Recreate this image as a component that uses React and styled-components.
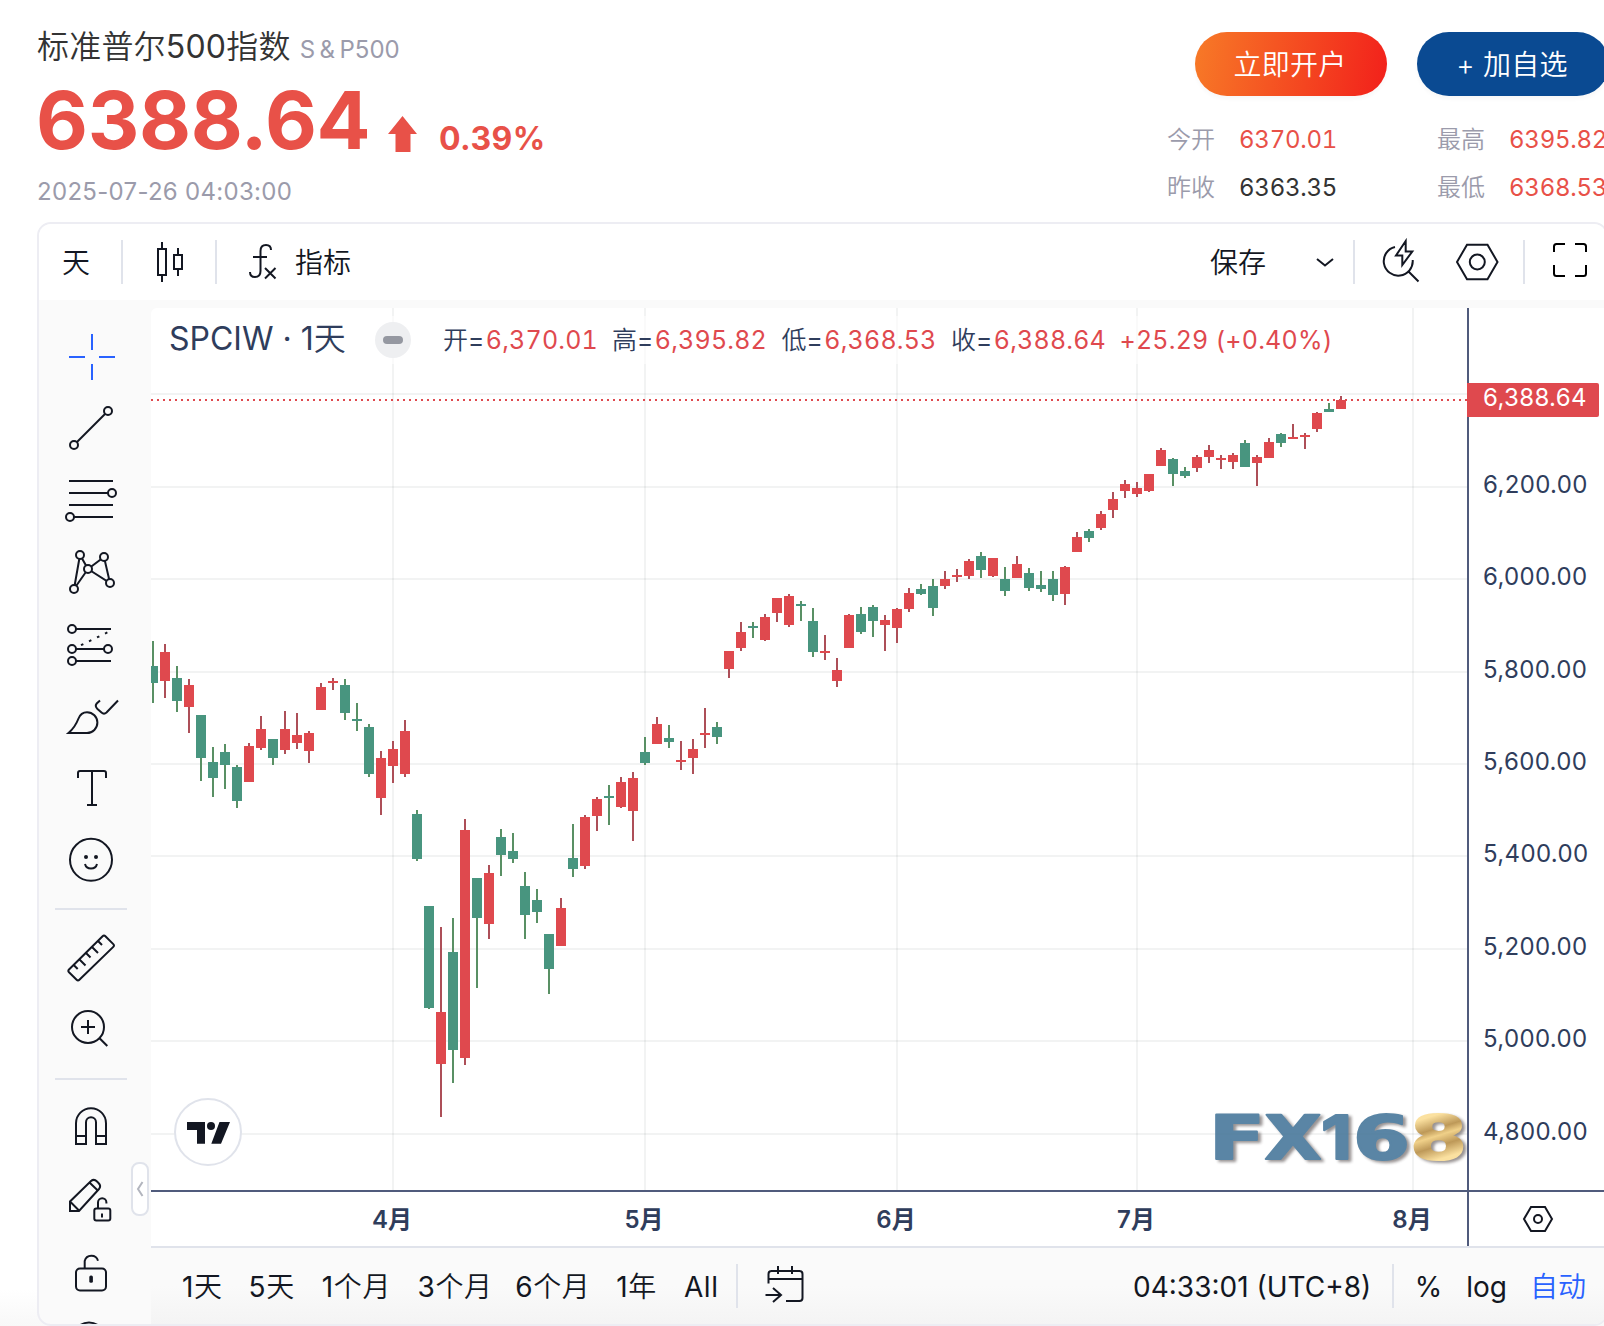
import styled, { createGlobalStyle } from 'styled-components';

const GlobalStyle = createGlobalStyle`
  :root {
    --up: #df494e;
    --down: #48957f;
    --ink: #131722;
    --axis: #2f3d5c;
    --muted: #9b9bab;
    --line: #e0e3eb;
    --panel: #fafafa;
    --blue: #2962ff;
  }

  * {
    box-sizing: border-box;
  }

  body {
    margin: 0;
    background: #fff;
    font-family: Inter, 'Noto Sans CJK SC', sans-serif;
    overflow: hidden;
  }
`;

const Page = styled.div`
  width: 1604px;
  height: 1326px;
  overflow: hidden;
  background: linear-gradient(to bottom, #fff 1290px, #f8f8f8 1326px);
`;

const Header = styled.header`
  display: flex;
  justify-content: space-between;
  width: 1609px;
  height: 222px;
  padding-left: 37px;
`;

const Quote = styled.div`
  display: flex;
  flex-direction: column;
`;

const Title = styled.h1`
  display: flex;
  align-items: baseline;
  gap: 9px;
  height: 46px;
  margin: 24px 0 0;
  color: #333;
  font-size: 32px;
  font-weight: 400;
  letter-spacing: 0.2px;
  line-height: 46px;
  white-space: nowrap;
`;

const Han = styled.span`
  font-weight: 350;
`;

const Symbol = styled.span`
  color: var(--muted);
  font-size: 24px;
  letter-spacing: 0;
`;

const Wide = styled.span`
  letter-spacing: 4.5px;
`;

const PriceRow = styled.div`
  display: flex;
  align-items: flex-start;
  height: 98px;
  color: #e85148;
`;

const Price = styled.span`
  width: 352px;
  margin: 1px 0 0 -1px;
  font-size: 80px;
  font-weight: 700;
  letter-spacing: -0.3px;
  line-height: 98px;
`;

const Arrow = styled.svg`
  width: 29px;
  height: 36px;
  margin-top: 46px;
  fill: currentColor;
`;

const Change = styled.span`
  margin: 49px 0 0 22px;
  font-size: 32px;
  font-weight: 650;
  letter-spacing: 0.4px;
  line-height: 40px;
`;

const Stamp = styled.span`
  height: 48px;
  color: var(--muted);
  font-size: 24px;
  letter-spacing: 0.3px;
  line-height: 48px;
`;

const Aside = styled.div`
  width: 442px;
  padding-top: 32px;
`;

const Actions = styled.div`
  display: flex;
  gap: 30px;
  padding-left: 28px;
`;

const Action = styled.button`
  width: 192px;
  height: 64px;
  padding: 0 2px 2px 0;
  border: 0;
  border-radius: 32px;
  background: ${({ $primary }) =>
    $primary ? '#0a4a92' : 'linear-gradient(100deg, #f77a27, #f2201b)'};
  box-shadow: 0 3px 4px rgba(0, 0, 0, 0.03);
  color: #fff;
  font-family: inherit;
  font-size: 28px;
  font-weight: 350;
  letter-spacing: 0.3px;
`;

const Stats = styled.dl`
  display: grid;
  grid-template-columns: 72px 198px 72px 110px;
  grid-auto-rows: 48px;
  margin: 20px 0 0;
  font-size: 24px;
  line-height: 48px;
`;

const StatName = styled.dt`
  color: var(--muted);
  font-weight: 350;
`;

const StatValue = styled.dd`
  margin: 0;
  color: ${({ $flat }) => ($flat ? '#333' : '#e85148')};
  font-variant-numeric: tabular-nums;
  letter-spacing: -0.25px;
`;

const Widget = styled.section`
  display: flex;
  flex-direction: column;
  width: 1571px;
  height: 1104px;
  margin-left: 37px;
  overflow: hidden;
  border: 2px solid #ededf3;
  border-radius: 14px;
  background: var(--panel);
`;

const TopBar = styled.div`
  display: flex;
  align-items: center;
  height: 76px;
  flex: none;
  background: #fff;
  color: var(--ink);
  font-size: 28px;
`;

const BarText = styled.span`
  margin-left: ${({ $left }) => $left}px;
  padding-top: 2px;
  color: ${({ $active }) => ($active ? 'var(--blue)' : 'var(--ink)')};
  font-size: 28px;
  line-height: 40px;
  letter-spacing: ${({ $spacing }) => $spacing || '0'};
  white-space: nowrap;
`;

const Divider = styled.span`
  flex: none;
  width: 2px;
  height: 44px;
  margin-left: ${({ $left }) => $left}px;
  background: var(--line);
`;

const Icon = styled.svg`
  display: block;
  flex: none;
  width: 56px;
  height: 56px;
  margin-left: ${({ $left }) => $left || 0}px;
  margin-right: ${({ $right }) => $right || 0}px;
  fill: none;
  stroke: ${({ $active }) => ($active ? 'var(--blue)' : 'var(--ink)')};
  stroke-width: 2;
`;

const Spacer = styled.span`
  flex: 1;
`;

const Body = styled.div`
  display: flex;
  flex: 1;
  min-height: 0;
`;

const Tools = styled.nav`
  position: relative;
  flex: none;
  width: 112px;
  padding-top: 20px;
`;

const Tool = styled.div`
  display: flex;
  align-items: center;
  height: 72px;
  padding-left: 24px;
`;

const ToolRule = styled.div`
  width: 72px;
  height: 2px;
  margin: ${({ $gap }) => $gap};
  background: var(--line);
`;

const Collapse = styled.div`
  position: absolute;
  top: 862px;
  left: 92px;
  display: flex;
  align-items: center;
  justify-content: center;
  width: 18px;
  height: 54px;
  border: 2px solid var(--line);
  border-radius: 8px;
  background: #fff;
`;

const Main = styled.div`
  display: flex;
  flex-direction: column;
  flex: none;
  width: 1455px;
  padding-top: 8px;
`;

const ChartArea = styled.div`
  position: relative;
  height: 938px;
  overflow: hidden;
  border-top-left-radius: 6px;
  background: #fff;
`;

const Plot = styled.svg`
  display: block;
`;

const AxisLabel = styled.text`
  fill: ${({ $badge }) => ($badge ? '#fff' : 'var(--axis)')};
  font-size: 24px;
  font-weight: ${({ $strong }) => ($strong ? 600 : 400)};
  text-anchor: ${({ $strong }) => ($strong ? 'middle' : 'start')};
  letter-spacing: ${({ $strong }) => ($strong ? '0' : '0.35px')};
`;

const Watermark = styled.g`
  font-family: 'DejaVu Sans', sans-serif;
  font-size: 61px;
  font-weight: 700;
  stroke-width: 2px;
  stroke-linejoin: round;
  filter: drop-shadow(3px 2px 1.5px rgba(60, 50, 50, 0.6));
`;

const Legend = styled.div`
  position: absolute;
  top: 8px;
  left: 12px;
  display: flex;
  align-items: center;
  height: 48px;
  padding: 0 6px;
  background: rgba(255, 255, 255, 0.6);
  color: var(--axis);
  white-space: nowrap;
`;

const LegendTitle = styled.span`
  width: 206px;
  padding-bottom: 2px;
  font-size: 32px;
  line-height: 40px;
`;

const Minus = styled.span`
  display: flex;
  align-items: center;
  justify-content: center;
  width: 36px;
  height: 36px;
  margin-right: 32px;
  border-radius: 50%;
  background: #eeeff1;

  &::after {
    content: '';
    width: 20px;
    height: 8px;
    border-radius: 4px;
    background: #9598a1;
  }
`;

const Ohlc = styled.span`
  width: ${({ $width }) => $width}px;
  font-size: 25px;
  font-variant-numeric: tabular-nums;
  line-height: 30px;

  > em {
    margin-left: ${({ $width }) => ($width ? 1.5 : 0)}px;
    color: var(--up);
    font-style: normal;
    letter-spacing: 0.2px;
  }
`;

const LogoBadge = styled.div`
  position: absolute;
  top: 790px;
  left: 23px;
  width: 68px;
  height: 68px;
  border: 2px solid var(--line);
  border-radius: 50%;
  background: #fff;
`;

const BottomBar = styled.div`
  display: flex;
  align-items: center;
  height: 78px;
  padding-right: 20px;
  border-top: 2px solid var(--line);
  background: linear-gradient(to bottom, #fafafa 50%, #f4f4f4);
`;

// top of wick, top of body, bottom of body, bottom of wick; 1 = rising day
const CANDLES = [
  [641, 666, 683, 703, 0], [644, 652, 681, 698, 1], [666, 678, 701, 712, 0],
  [679, 685, 707, 733, 1], [715, 715, 758, 781, 0], [747, 762, 778, 797, 0],
  [744, 752, 765, 789, 0], [765, 767, 801, 808, 0], [743, 746, 782, 782, 1],
  [716, 729, 748, 750, 1], [739, 739, 758, 765, 0], [711, 729, 750, 754, 1],
  [713, 735, 743, 749, 1], [731, 733, 751, 763, 1], [683, 687, 710, 710, 1],
  [678, 681, 683, 690, 1], [679, 685, 713, 720, 0], [703, 719, 721, 731, 0],
  [724, 727, 774, 777, 0], [751, 758, 798, 815, 1], [741, 749, 766, 783, 1],
  [720, 731, 774, 777, 1], [810, 814, 859, 861, 0], [906, 906, 1008, 1009, 0],
  [927, 1012, 1064, 1117, 1], [918, 952, 1050, 1083, 0], [819, 830, 1058, 1065, 1],
  [878, 878, 918, 988, 0], [865, 873, 924, 939, 1], [829, 837, 855, 876, 0],
  [833, 851, 859, 863, 0], [872, 886, 915, 939, 0], [889, 900, 912, 923, 0],
  [934, 934, 969, 994, 0], [898, 908, 946, 946, 1], [824, 858, 869, 877, 0],
  [815, 817, 866, 869, 1], [797, 799, 816, 831, 1], [785, 796, 798, 825, 0],
  [777, 782, 807, 808, 1], [772, 778, 811, 841, 1], [737, 752, 763, 765, 0],
  [717, 724, 744, 744, 1], [725, 738, 742, 748, 0], [741, 760, 762, 770, 1],
  [739, 749, 758, 774, 1], [708, 733, 735, 748, 1], [722, 727, 737, 744, 0],
  [651, 651, 669, 678, 1], [622, 632, 648, 651, 1], [622, 626, 628, 638, 0],
  [614, 617, 640, 641, 1], [598, 598, 613, 622, 1], [594, 596, 625, 627, 1],
  [601, 604, 606, 621, 0], [608, 621, 652, 657, 0], [635, 651, 653, 660, 1],
  [658, 670, 681, 687, 1], [614, 615, 648, 648, 1], [607, 614, 632, 634, 0],
  [605, 607, 621, 637, 0], [615, 620, 625, 651, 1], [608, 609, 628, 643, 1],
  [588, 593, 609, 612, 1], [584, 589, 594, 595, 0], [579, 586, 608, 616, 0],
  [571, 579, 586, 589, 1], [569, 575, 577, 582, 1], [559, 561, 576, 579, 1],
  [552, 556, 570, 578, 0], [558, 558, 576, 577, 1], [567, 579, 591, 596, 0],
  [556, 564, 578, 578, 1], [568, 573, 588, 591, 0], [571, 585, 589, 592, 0],
  [571, 579, 595, 601, 0], [566, 567, 594, 605, 1], [532, 537, 552, 552, 1],
  [529, 531, 538, 542, 0], [511, 514, 528, 530, 1], [492, 499, 510, 518, 1],
  [480, 484, 491, 498, 1], [482, 488, 494, 497, 1], [474, 474, 491, 492, 1],
  [448, 450, 466, 466, 1], [458, 459, 474, 486, 0], [467, 471, 476, 478, 0],
  [455, 457, 468, 472, 1], [445, 450, 457, 463, 1], [455, 458, 460, 469, 1],
  [453, 455, 462, 469, 1], [440, 443, 467, 467, 0], [455, 457, 463, 486, 1],
  [438, 442, 458, 458, 1], [433, 434, 443, 447, 0], [424, 437, 439, 439, 1],
  [433, 435, 437, 449, 1], [412, 413, 429, 432, 1], [403, 409, 412, 412, 0],
  [396, 400, 409, 409, 1],
];

const PRICES = [
  { y: 394 },
  { y: 487, label: '6,200.00' },
  { y: 579, label: '6,000.00' },
  { y: 672, label: '5,800.00' },
  { y: 764, label: '5,600.00' },
  { y: 856, label: '5,400.00' },
  { y: 949, label: '5,200.00' },
  { y: 1041, label: '5,000.00' },
  { y: 1134, label: '4,800.00' },
];

const MONTHS = [
  { x: 393, label: '4月' },
  { x: 645, label: '5月' },
  { x: 897, label: '6月' },
  { x: 1137, label: '7月' },
  { x: 1413, label: '8月' },
];

const STATS = [
  ['今开', '6370.01'],
  ['最高', '6395.82'],
  ['昨收', '6363.35', true],
  ['最低', '6368.53'],
];

const OHLC = [
  ['开', '6,370.01', 169],
  ['高', '6,395.82', 169.5],
  ['低', '6,368.53', 169.5],
  ['收', '6,388.64', 168.5],
];

const RANGES = [
  ['1天', 31],
  ['5天', 26],
  ['1个月', 27],
  ['3个月', 26.5],
  ['6个月', 22.5],
  ['1年', 26],
  ['All', 27],
];

// Chinese runs are set a touch lighter than the latin ones beside them
const Mixed = ({ children }) =>
  children
    .split(/([\u4e00-\u9fff]+)/)
    .map((part, i) => (i % 2 ? <Han key={i}>{part}</Han> : part));

const Ring = ({ x, y }) => <circle cx={x} cy={y} r="4" fill="#fafafa" />;

const drawingTools = [
  <path d="M6 29h16M36 29h16M29 6v16M29 36v16" />,
  <>
    <path d="M11 45 45 11" />
    <Ring x={45} y={11} />
    <Ring x={11} y={45} />
  </>,
  <>
    <path d="M6 9h44M6 21h40M6 33h44M10 45h40" />
    <Ring x={49} y={21} />
    <Ring x={7} y={45} />
  </>,
  <>
    <path d="M17 11 11 45 25 25zM25 25 41 13 47 39z" />
    <Ring x={17} y={11} />
    <Ring x={41} y={13} />
    <Ring x={25} y={25} />
    <Ring x={11} y={45} />
    <Ring x={47} y={39} />
  </>,
  <>
    <path d="M12 13h36M12 33h30M12 45h36" />
    <path d="M18 29.2 46 15.6" strokeDasharray="2.6 6.3" />
    <Ring x={9} y={13} />
    <Ring x={9} y={33} />
    <Ring x={45} y={33} />
    <Ring x={9} y={45} />
  </>,
  <>
    <path d="M5.5 45H24a10.4 10.4 0 0 0 0-20.8c-4 0-7 2.3-8.5 6.3C13 37 9 42 5.5 45z" />
    <path d="M55 12.5 43.5 24.5q-2.5 2.3-5 0L34.5 21q-3-3-.8-5.5l3.3-3" />
  </>,
  <path d="M15 18v-5q0-2 2-2h24q2 0 2 2v5M29 11v34M24 45h10" />,
  <>
    <circle cx="28" cy="27.8" r="21" />
    <circle cx="23" cy="25" r="2" fill="#131722" stroke="none" />
    <circle cx="33" cy="25" r="2" fill="#131722" stroke="none" />
    <path d="M22 32c1.5 6 10.5 6 12 0" />
  </>,
];

const measureTools = [
  <>
    <path d="M39.6 4.2q1.4-1.4 2.8 0l7.9 7.9q1.4 1.4 0 2.8L16.4 47.8q-1.4 1.4-2.8 0L6 40.3q-1.4-1.4 0-2.8z" />
    <path d="m35 9 4 4M29 15l6 6M23 21l4.5 4.5M16.5 27.5l6 6M10.7 33l4 4" />
  </>,
  <>
    <circle cx="25" cy="23" r="16" />
    <path d="M18 23h14M25 16v14M36.3 34l8 8" />
  </>,
];

const lockTools = [
  <path d="M13 43V22.2a15 15 0 0 1 30 0V43H33V21.2a5 5 0 0 0-10 0V43zM13 35h10M33 35h10" />,
  <>
    <path d="M7 38v-9.5L28 8q3-2.5 6 .5l1.5 1.5q3 3 .5 6L16 38zM7 28.5l9.5 9.5M27 10l8.3 8" />
    <rect x="31.3" y="35.5" width="16" height="12" rx="2" />
    <path d="M35 35.5v-6a4.2 4.2 0 0 1 8.4 0v1M39 40.5v4" />
  </>,
  <>
    <rect x="13" y="23.5" width="30" height="22" rx="4" />
    <path d="M21.7 23.5V16a6.9 6.9 0 0 1 13.3-.3" />
    <rect x="26.3" y="30.5" width="3.6" height="7.3" rx="1.5" fill="#131722" stroke="none" />
  </>,
  <circle cx="26" cy="21.5" r="16" />,
];

const ToolGroup = ({ icons, active }) =>
  icons.map((icon, i) => (
    <Tool key={i}>
      <Icon viewBox="0 0 56 56" $active={active === i}>
        {icon}
      </Icon>
    </Tool>
  ));

const Chart = () => (
  <Plot width="1453" height="938" viewBox="151 308 1453 938">
    <defs>
      <linearGradient id="gold" x1="0" y1="0" x2="0.25" y2="1">
        <stop offset="0.28" stopColor="#fbdd93" />
        <stop offset="0.46" stopColor="#b58b42" />
        <stop offset="0.56" stopColor="#efcb7a" />
        <stop offset="0.7" stopColor="#b58b42" />
        <stop offset="0.88" stopColor="#fbdd93" />
      </linearGradient>
    </defs>
    <g fill="#2a2e39" fillOpacity="0.06">
      {PRICES.map(({ y }) => (
        <rect key={y} x="151" y={y - 1} width="1316" height="2" />
      ))}
      {MONTHS.map(({ x }) => (
        <rect key={x} x={x - 1} y="308" width="2" height="882" />
      ))}
    </g>
    <Watermark opacity="0.88">
      <g fill="#447599" stroke="#447599">
        <text x="1209" y="1159" textLength="56" lengthAdjust="spacingAndGlyphs">F</text>
        <text x="1264.5" y="1159" textLength="57" lengthAdjust="spacingAndGlyphs">X</text>
        <text x="1321" y="1159" textLength="31" lengthAdjust="spacingAndGlyphs" fontFamily="Inter">1</text>
        <text x="1353" y="1159" textLength="57" lengthAdjust="spacingAndGlyphs">6</text>
      </g>
      <text x="1410" y="1159" textLength="57" lengthAdjust="spacingAndGlyphs" fill="url(#gold)" stroke="url(#gold)">8</text>
    </Watermark>
    {CANDLES.map(([high, top, bottom, low, up], i) => {
      const x = 153 + i * 12;
      return (
        <g key={x}>
          <rect x={x - 1} y={high} width="2" height={low - high} fill={up ? '#ad4f58' : '#599064'} />
          <rect x={x - 5} y={top} width="10" height={bottom - top} fill={up ? '#df494e' : '#48957f'} />
        </g>
      );
    })}
    <path d="M151 400H1467" stroke="#df494e" strokeWidth="2" strokeDasharray="2 4" />
    <g fill="#505b7c">
      <rect x="1467" y="308" width="2" height="938" />
      <rect x="151" y="1190" width="1453" height="2" />
    </g>
    {PRICES.filter(({ label }) => label).map(({ y, label }) => (
      <AxisLabel key={label} x="1483" y={y + 6}>
        {label}
      </AxisLabel>
    ))}
    <path d="M1467 383h130a2 2 0 0 1 2 2v30a2 2 0 0 1-2 2h-130z" fill="#df494e" />
    <AxisLabel x="1483" y="406" $badge>
      6,388.64
    </AxisLabel>
    {MONTHS.map(({ x, label }) => (
      <AxisLabel key={label} x={x - 1} y="1228" $strong>
        {label}
      </AxisLabel>
    ))}
    <g fill="none" stroke="#131722" strokeWidth="2">
      <path d="M1531 1207h14l7 12-7 12h-14l-7-12z" />
      <circle cx="1538" cy="1219" r="4" />
    </g>
  </Plot>
);

const App = () => {
  return (
    <Page>
      <GlobalStyle />
      <Header>
        <Quote>
          <Title>
            <span>
              <Mixed>标准普尔500指数</Mixed>
            </span>
            <Symbol>
              <Wide>S&</Wide>P500
            </Symbol>
          </Title>
          <PriceRow>
            <Price>6388.64</Price>
            <Arrow viewBox="0 0 29 36">
              <path d="M14.5 0 29 18h-6.5v18h-15V18H0z" />
            </Arrow>
            <Change>0.39%</Change>
          </PriceRow>
          <Stamp>2025-07-26 04:03:00</Stamp>
        </Quote>
        <Aside>
          <Actions>
            <Action>立即开户</Action>
            <Action $primary>+ 加自选</Action>
          </Actions>
          <Stats>
            {STATS.map(([name, value, flat]) => [
              <StatName key={name}>{name}</StatName>,
              <StatValue key={value} $flat={flat}>
                {value}
              </StatValue>,
            ])}
          </Stats>
        </Aside>
      </Header>
      <Widget>
        <TopBar>
          <BarText $left={23}>
            <Han>天</Han>
          </BarText>
          <Divider $left={31} />
          <Icon viewBox="0 0 56 56" $left={19}>
            <path d="M16 15h8v26h-8zM20 8v7M20 41v7M32 21h8v14h-8zM36 14v7M36 35v7" />
          </Icon>
          <Divider $left={17} />
          <Icon viewBox="0 0 56 56" $left={18}>
            <path d="M36 16q0-5-5-5-5.5 0-5.5 6v20q0 6-5.5 6-5 0-5-5M18 23h14M30 34l10.5 10.5M40.5 34 30 44.5" />
          </Icon>
          <BarText $left={4}>
            <Han>指标</Han>
          </BarText>
          <Spacer />
          <BarText>
            <Han>保存</Han>
          </BarText>
          <Icon viewBox="0 0 56 56" $left={31}>
            <path d="m20 25 8 6.5 8-6.5" />
          </Icon>
          <Divider $left={0} />
          <Icon viewBox="0 0 56 56" $left={18}>
            <path d="M22 13a14.5 14.5 0 1 0 17.7 13M35 37l10.5 10.5M32.7 7 23 21.5h6.3V31l10-13.5h-6.6z" />
          </Icon>
          <Icon viewBox="0 0 56 56" $left={20}>
            <path d="M18 10.7h20.5L48.5 28l-10 17.3H18L8 28z" />
            <circle cx="28.3" cy="28" r="7.5" />
          </Icon>
          <Divider $left={18} />
          <Icon viewBox="0 0 56 56" $left={17} $right={8}>
            <path
              d="M12 18V12.5q0-2.5 2.5-2.5H23M33 10h8.5q2.5 0 2.5 2.5V18M44 31v8.5q0 2.5-2.5 2.5H33M23 42h-8.5q-2.500 0-2.5-2.5V31"
              stroke="#000"
            />
          </Icon>
        </TopBar>
        <Body>
          <Tools>
            <ToolGroup icons={drawingTools} active={0} />
            <ToolRule $gap="12px 0 14px 16px" />
            <ToolGroup icons={measureTools} />
            <ToolRule $gap="10px 0 13px 16px" />
            <ToolGroup icons={lockTools} />
            <Collapse>
              <svg width="8" height="16" viewBox="0 0 8 16" fill="none" stroke="#b2b5be" strokeWidth="2">
                <path d="M6.5 1 2 8l4.5 7" />
              </svg>
            </Collapse>
          </Tools>
          <Main>
            <ChartArea>
              <Chart />
              <Legend>
                <LegendTitle>
                  <Mixed>SPCIW · 1天</Mixed>
                </LegendTitle>
                <Minus />
                {OHLC.map(([name, value, width]) => (
                  <Ohlc key={name} $width={width}>
                    <Han>{name}</Han>=<em>{value}</em>
                  </Ohlc>
                ))}
                <Ohlc>
                  <em>+25.29 (+0.40%)</em>
                </Ohlc>
              </Legend>
              <LogoBadge>
                <svg width="64" height="64" viewBox="176 1098 64 64" fill="#131722">
                  <path d="M187 1120h18v21.7h-8V1128h-10zM219.5 1120H230l-9 21.7h-9.7z" />
                  <circle cx="211" cy="1124" r="4" />
                </svg>
              </LogoBadge>
            </ChartArea>
            <BottomBar>
              {RANGES.map(([label, left]) => (
                <BarText key={label} $left={left} $spacing="0.6px">
                  <Mixed>{label}</Mixed>
                </BarText>
              ))}
              <Divider $left={17.5} />
              <Icon viewBox="0 0 56 56" $left={20}>
                <path d="M10.5 25.5V16q0-3 3-3h28q3 0 3 3v24q0 3-3 3H28M10.5 21h34M20 8v8M34 8v8M7.5 37H23M15 30l8 7-8 7" />
              </Icon>
              <Spacer />
              <BarText>04:33:01 (UTC+8)</BarText>
              <Divider $left={20.5} />
              <BarText $left={21}>%</BarText>
              <BarText $left={24}>log</BarText>
              <BarText $left={23} $active>
                <Han>自动</Han>
              </BarText>
            </BottomBar>
          </Main>
        </Body>
      </Widget>
    </Page>
  );
};

export default App;
